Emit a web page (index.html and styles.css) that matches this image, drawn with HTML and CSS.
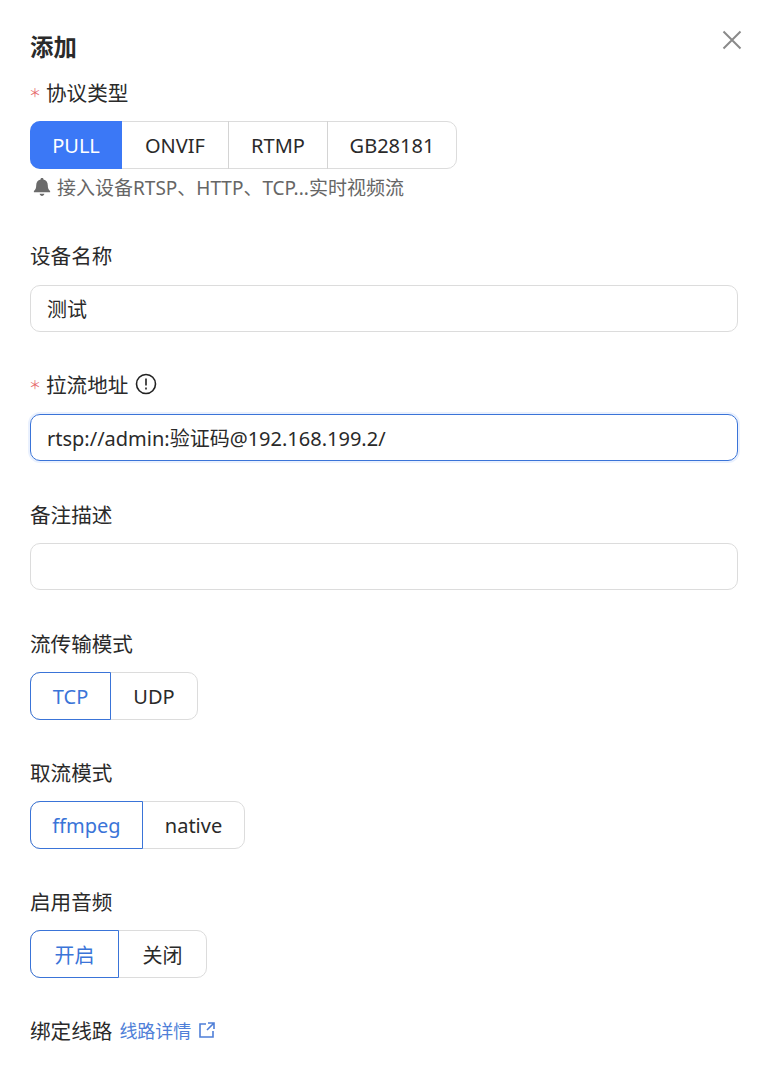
FILE: index.html
```html
<!DOCTYPE html>
<html lang="zh-CN">
  <head>
    <title>添加</title>
    <meta charset="utf-8" />
    <link rel="stylesheet" href="styles.css">
  </head>
  <body>
    <div class="drawer">
      <div class="drawer-head">
        <h1 class="drawer-title">添加</h1>
        <svg class="close-icon" width="22" height="22" viewBox="0 0 22 22" fill="none" stroke="#8a8a8a" stroke-width="2">
          <path d="M2.500 2.500 L19.500 19.500 M19.500 2.500 L2.500 19.500" />
        </svg>
      </div>

      <div class="form-item with-hint">
        <div class="form-label"><span class="required">＊</span>协议类型</div>
        <div class="segment">
          <span class="seg-btn seg-filled seg-pull">PULL</span>
          <span class="seg-btn seg-onvif">ONVIF</span>
          <span class="seg-btn seg-rtmp">RTMP</span>
          <span class="seg-btn seg-gb">GB28181</span>
        </div>
        <div class="hint">
          <svg class="bell-icon" width="20" height="20" viewBox="0 0 18 18" fill="#6b6b6b">
            <path d="M9 1c.8 0 1.3.5 1.3 1.2 2.6.6 3.9 2.7 3.9 5.3 0 2.600.7 3.900 2.100 5.200v1H1.700v-1c1.400-1.300 2.100-2.600 2.100-5.200 0-2.600 1.300-4.700 3.900-5.300C7.700 1.500 8.200 1 9 1zM6.900 15h4.200c-.2 1.200-1 2-2.100 2s-1.900-.8-2.100-2z" />
          </svg>
          接入设备RTSP、HTTP、TCP...实时视频流
        </div>
      </div>

      <div class="form-item">
        <div class="form-label">设备名称</div>
        <div class="text-input">测试</div>
      </div>

      <div class="form-item">
        <div class="form-label">
          <span class="required">＊</span>拉流地址
          <svg class="info-icon" width="22" height="22" viewBox="0 0 22 22" fill="none" stroke="#222" stroke-width="1.600">
            <circle cx="11" cy="11" r="9.500" />
            <path d="M11 5.500 V12.500 M11 14.500 V16.500" />
          </svg>
        </div>
        <div class="text-input text-input-focus">rtsp://admin:验证码@192.168.199.2/</div>
      </div>

      <div class="form-item">
        <div class="form-label">备注描述</div>
        <div class="text-input"></div>
      </div>

      <div class="form-item form-item-seg">
        <div class="form-label">流传输模式</div>
        <div class="segment">
          <span class="seg-btn seg-active seg-tcp">TCP</span>
          <span class="seg-btn seg-udp">UDP</span>
        </div>
      </div>

      <div class="form-item form-item-seg">
        <div class="form-label">取流模式</div>
        <div class="segment">
          <span class="seg-btn seg-active seg-ffmpeg">ffmpeg</span>
          <span class="seg-btn seg-native">native</span>
        </div>
      </div>

      <div class="form-item form-item-seg">
        <div class="form-label">启用音频</div>
        <div class="segment">
          <span class="seg-btn seg-active seg-on">开启</span>
          <span class="seg-btn seg-off">关闭</span>
        </div>
      </div>

      <div class="form-label">
        绑定线路
        <a class="detail-link">线路详情
          <svg class="link-icon" width="18" height="18" viewBox="0 0 18 18" fill="none" stroke="#4f7fd8" stroke-width="1.600">
            <path d="M8 3 H2 V16 H15 V10 M10 2 H16 V8 M16 2 L9 9" />
          </svg>
        </a>
      </div>
    </div>
  </body>
</html>
```

FILE: styles.css
```css
body {
  margin: 0;
  background: #fff;
  color: #2a2a2a;
  font-family: "Noto Sans", "Noto Sans CJK SC", sans-serif;
  font-size: 20px;
}

.drawer {
  padding: 29px 32px 0 30px;
}

.drawer-head {
  display: flex;
  justify-content: space-between;
  align-items: flex-start;
  height: 46px;
}

.drawer-title {
  margin: 0;
  font-size: 23.400px;
  line-height: 36px;
  font-weight: 700;
}

.close-icon {
  margin-right: -5px;
}

.form-item {
  margin-bottom: 35.800px;
}

.form-item-seg {
  margin-bottom: 34.500px;
}

.with-hint {
  margin-bottom: 36px;
}

.form-label {
  display: flex;
  align-items: center;
  box-sizing: border-box;
  height: 35px;
  padding-bottom: 1px;
  font-size: 20.600px;
}

.form-item > .form-label {
  margin-bottom: 11.500px;
}

.with-hint > .form-label {
  margin-bottom: 11px;
}

.required {
  width: 17px;
  margin-left: -1px;
  color: #e5686a;
  font-family: "Noto Sans CJK SC", sans-serif;
  font-size: 12px;
}

.info-icon {
  margin-left: 7px;
}

.segment {
  display: flex;
  width: fit-content;
  height: 48px;
  box-sizing: border-box;
  border: 1px solid #dcdcdc;
  border-radius: 10px;
}

.seg-btn {
  display: flex;
  align-items: center;
  justify-content: center;
  margin: -1px 0;
  box-sizing: border-box;
  height: 48px;
}

.seg-btn + .seg-btn {
  border-left: 1px solid #d4d4d4;
}

.seg-btn:first-child {
  margin-left: -1px;
  border-radius: 10px 0 0 10px;
}

.seg-filled {
  background: #3b78f6;
  color: #fff;
}

.seg-active {
  border: 1px solid #3a74d8;
  color: #3a74d8;
}

.seg-active + .seg-btn {
  border-left: 0;
}

.seg-filled + .seg-btn {
  border-left: 0;
}

.seg-pull { width: 92px; }
.seg-onvif { width: 106px; }
.seg-rtmp { width: 99px; }
.seg-gb { width: 129px; }
.seg-tcp { width: 81px; }
.seg-udp { width: 86px; }
.seg-ffmpeg { width: 113px; }
.seg-native { width: 101px; }
.seg-on { width: 89px; }
.seg-off { width: 87px; }

.hint {
  display: flex;
  align-items: center;
  gap: 5px;
  margin-top: 3px;
  height: 30px;
  padding-left: 2px;
  color: #666;
  font-size: 19px;
}

.text-input {
  display: flex;
  align-items: center;
  box-sizing: border-box;
  height: 47px;
  padding: 0 16px;
  border: 1px solid #dcdcdc;
  border-radius: 10px;
}

.text-input-focus {
  border-color: #3a74d8;
  box-shadow: 0 0 0 2px #eaf1fe;
}

.detail-link {
  display: flex;
  align-items: center;
  gap: 7px;
  margin-left: 7px;
  color: #4f7fd8;
  font-size: 18px;
}
```
